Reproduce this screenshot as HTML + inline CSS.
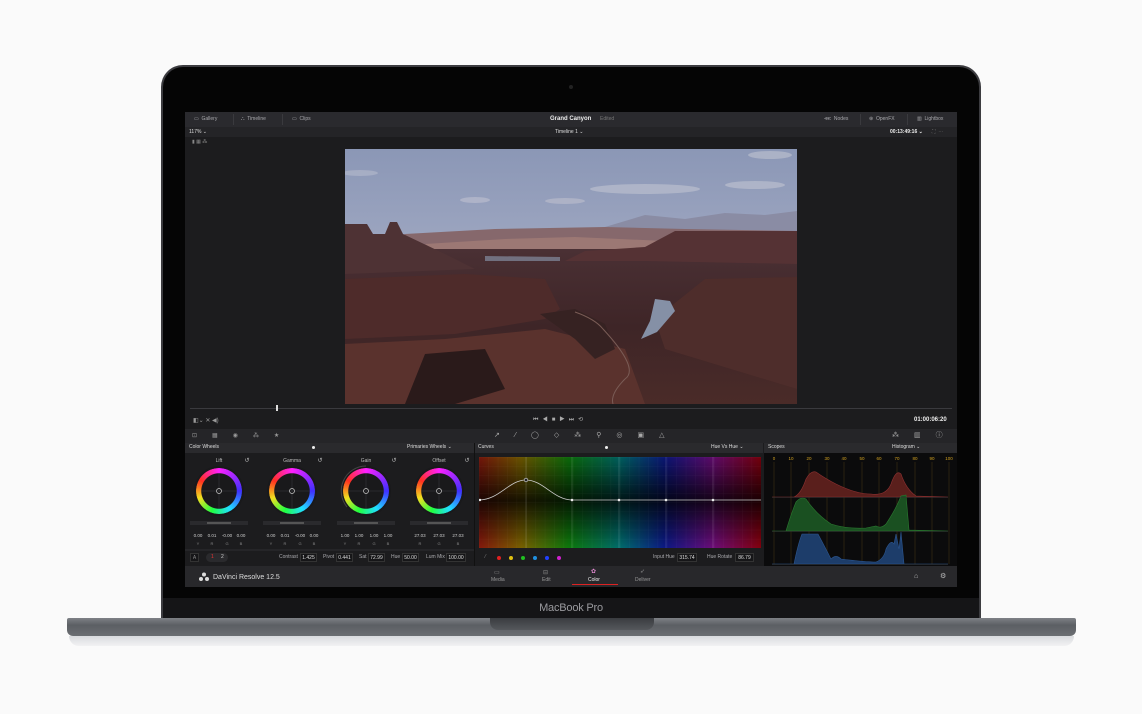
<!DOCTYPE html>
<html><head><meta charset="utf-8"><style>
*{margin:0;padding:0;box-sizing:border-box}
body{width:1142px;height:714px;background:#fafafa;position:relative;overflow:hidden;font-family:"Liberation Sans",sans-serif;color:#bbb}
.a{position:absolute}
.t{position:absolute;font-size:5px;color:#a9a9ad;white-space:nowrap;line-height:1}
.box{position:absolute;background:#161618;border:1px solid #333;font-size:5px;color:#ddd;text-align:center;line-height:8px;height:9px}
.sep{position:absolute;width:1px;background:#3a3a3e}
.wh{position:absolute;width:46px;height:46px;border-radius:50%;background:conic-gradient(#ff20ff,#4030ff 90deg,#20e0ff 150deg,#20ff40 200deg,#f0e020 250deg,#ff3020 300deg,#ff20ff);-webkit-mask:radial-gradient(circle,transparent 17.5px,#000 18px,#000 23px,transparent 23.5px);mask:radial-gradient(circle,transparent 17.5px,#000 18px,#000 23px,transparent 23.5px)}
</style></head><body>
<!-- lid -->
<div class="a" style="left:161px;top:65px;width:820px;height:554px;background:#3c3c40;border-radius:22px 22px 0 0"></div>
<div class="a" style="left:163px;top:67px;width:816px;height:552px;background:#050505;border-radius:20px 20px 0 0"></div>
<div class="a" style="left:569px;top:85px;width:4px;height:4px;border-radius:50%;background:#222"></div>
<div class="a" style="left:163px;top:598px;width:816px;height:20px;background:#151517"></div>
<div class="a" style="left:0;top:602px;width:1142px;text-align:center;font-size:11px;color:#9a9a9e;letter-spacing:-0.2px">MacBook Pro</div>
<!-- base -->
<div class="a" style="left:67px;top:618px;width:1009px;height:18px;background:linear-gradient(#7e8186,#5c5f64 40%,#6b6e72);border-radius:2px 2px 6px 6px"></div>
<div class="a" style="left:69px;top:636px;width:1005px;height:10px;background:linear-gradient(#d9dbde,#f2f2f3);border-radius:0 0 40px 40px"></div>
<div class="a" style="left:490px;top:618px;width:164px;height:12px;background:linear-gradient(#3a3c40,#55585c);border-radius:0 0 8px 8px"></div>

<!-- screen -->
<div class="a" style="left:185px;top:112px;width:772px;height:475px;background:#1c1c1e"></div>
<div class="a" style="left:185px;top:112px;width:772px;height:15px;background:#2a2a2e"></div>
<div class="t" style="left:194px;top:117px">▭&nbsp; Gallery</div>
<div class="sep" style="left:233px;top:114px;height:11px"></div>
<div class="t" style="left:241px;top:117px">⛬&nbsp; Timeline</div>
<div class="sep" style="left:282px;top:114px;height:11px"></div>
<div class="t" style="left:292px;top:117px">▭&nbsp; Clips</div>
<div class="t" style="left:550px;top:116px;font-size:6px;color:#eee;font-weight:bold">Grand Canyon</div>
<div class="t" style="left:600px;top:117px;color:#777">Edited</div>
<div class="t" style="left:824px;top:117px">⋘&nbsp; Nodes</div>
<div class="sep" style="left:860px;top:114px;height:11px"></div>
<div class="t" style="left:869px;top:117px">⊛&nbsp; OpenFX</div>
<div class="sep" style="left:907px;top:114px;height:11px"></div>
<div class="t" style="left:917px;top:117px">▥&nbsp; Lightbox</div>
<div class="a" style="left:185px;top:127px;width:772px;height:10px;background:#242427"></div>
<div class="t" style="left:189px;top:130px;color:#ddd">117% ⌄</div>
<div class="t" style="left:555px;top:130px;color:#ddd">Timeline 1 ⌄</div>
<div class="t" style="left:890px;top:130px;color:#eee;font-weight:bold">00:13:49:16 ⌄</div>
<div class="t" style="left:932px;top:130px;color:#777">⛶ &nbsp;⋯</div>
<div class="t" style="left:192px;top:140px;color:#888">▮ ▦ ⁂</div>

<!-- image -->
<svg class="a" style="left:345px;top:149px" width="452" height="255" viewBox="0 0 452 255">
<defs>
<linearGradient id="sky" x1="0" y1="0" x2="0" y2="1"><stop offset="0" stop-color="#8b97b6"/><stop offset="0.6" stop-color="#a7aec6"/><stop offset="1" stop-color="#b3afc0"/></linearGradient>
<linearGradient id="gr" x1="0" y1="0" x2="0" y2="1"><stop offset="0" stop-color="#4a3034"/><stop offset="0.5" stop-color="#3e2527"/><stop offset="1" stop-color="#4a2b28"/></linearGradient>
</defs>
<rect width="452" height="255" fill="url(#sky)"/>
<ellipse cx="300" cy="40" rx="55" ry="5" fill="#c9cbd6" opacity=".5"/>
<ellipse cx="220" cy="52" rx="20" ry="3" fill="#c6c6d2" opacity=".5"/>
<ellipse cx="130" cy="51" rx="15" ry="3" fill="#c7c8d5" opacity=".5"/>
<ellipse cx="410" cy="36" rx="30" ry="4" fill="#c9cbd6" opacity=".5"/>
<ellipse cx="425" cy="6" rx="22" ry="4" fill="#c9cbd6" opacity=".5"/>
<ellipse cx="15" cy="24" rx="18" ry="3" fill="#c9cbd6" opacity=".4"/>
<path d="M260 78 L300 66 L340 70 L380 64 L420 66 L452 62 L452 84 L260 84Z" fill="#8a8ca4"/>
<path d="M60 85 L150 80 L260 78 L340 80 L452 82 L452 110 L0 110Z" fill="#86686c"/>
<path d="M80 95 L160 90 L230 88 L320 92 L300 105 L100 108Z" fill="#9c7874"/>
<rect x="0" y="100" width="452" height="155" fill="url(#gr)"/>
<path d="M0 75 L22 75 L28 85 L40 85 L45 73 L52 73 L58 85 L100 105 L130 120 L0 125Z" fill="#4e3234"/>
<path d="M330 82 L452 82 L452 115 L300 112 L220 112 L240 102 L300 98Z" fill="#553234"/>
<path d="M140 107 L215 108 L215 112 L140 112Z" fill="#8d9cb3" opacity=".6"/>
<path d="M0 130 L120 125 L200 130 L215 160 L200 170 L110 185 L0 190Z" fill="#4e2b2a"/>
<path d="M360 130 L452 128 L452 240 L320 200 L310 170Z" fill="#4e2d2b"/>
<path d="M0 195 L100 190 L200 180 L280 200 L300 255 L0 255Z" fill="#5a322d"/>
<path d="M80 205 L140 200 L160 240 L110 255 L60 255Z" fill="#2a1a1a"/>
<path d="M195 165 L230 160 L260 175 L270 200 L250 210 L230 190Z" fill="#362222"/>
<path d="M310 150 L325 152 L330 162 L312 183 L296 190 L305 172Z" fill="#8590a6"/>
<path d="M230 163 Q250 170 258 180 Q295 220 280 230 Q265 245 268 255" stroke="#7a5c56" stroke-width="1" fill="none"/>
</svg>

<!-- scrubber + transport -->
<div class="a" style="left:190px;top:408px;width:762px;height:1px;background:#3a3a3e"></div>
<div class="a" style="left:276px;top:405px;width:2px;height:6px;background:#ddd"></div>
<div class="t" style="left:193px;top:418px;font-size:6px;color:#999">◧⌄ ✕ ◀)</div>
<div class="t" style="left:533px;top:417px;font-size:6px;color:#aaa;letter-spacing:4px">⏮◀■▶⏭⟲</div>
<div class="t" style="left:914px;top:417px;font-size:6px;color:#eee;font-weight:bold">01:00:06:20</div>
<!-- toolbar -->
<div class="a" style="left:185px;top:429px;width:772px;height:14px;background:#252528"></div>
<div class="t" style="left:192px;top:433px;font-size:6px;color:#999;letter-spacing:15px">⊡▦◉⁂★</div>
<div class="t" style="left:494px;top:432px;font-size:7px;color:#aaa;letter-spacing:15px">↗⁄◯◇⁂⚲◎▣△</div>
<div class="t" style="left:892px;top:432px;font-size:7px;color:#aaa;letter-spacing:15px">⁂▥ⓘ</div>
<!-- panel headers -->
<div class="a" style="left:185px;top:443px;width:289px;height:10px;background:#2a2a2d"></div>
<div class="a" style="left:475px;top:443px;width:288px;height:10px;background:#2a2a2d"></div>
<div class="a" style="left:764px;top:443px;width:193px;height:10px;background:#2a2a2d"></div>
<div class="t" style="left:189px;top:445px;color:#ddd">Color Wheels</div>
<div class="a" style="left:312px;top:446px;width:3px;height:3px;border-radius:50%;background:#eee"></div>
<div class="t" style="left:407px;top:445px;color:#ddd">Primaries Wheels ⌄</div>
<div class="t" style="left:478px;top:445px;color:#ddd">Curves</div>
<div class="a" style="left:605px;top:446px;width:3px;height:3px;border-radius:50%;background:#eee"></div>
<div class="t" style="left:711px;top:445px;color:#ddd">Hue Vs Hue ⌄</div>
<div class="t" style="left:768px;top:445px;color:#ddd">Scopes</div>
<div class="t" style="left:892px;top:445px;color:#ddd">Histogram ⌄</div>

<!-- wheels -->
<svg class="a" style="left:185px;top:453px" width="289" height="113">
<g font-family="Liberation Sans" font-size="5" fill="#bbb" text-anchor="middle">
<g id="w">
<circle cx="34" cy="38" r="25" fill="#19191b"/>
<line x1="16" y1="38" x2="52" y2="38" stroke="#3a3a3e" stroke-width=".5"/><line x1="34" y1="20" x2="34" y2="56" stroke="#3a3a3e" stroke-width=".5"/>
<circle cx="34" cy="38" r="2.5" fill="none" stroke="#ccc" stroke-width=".7"/>
<rect x="5" y="68" width="58" height="4" fill="#2a2a2d"/><rect x="22" y="69" width="24" height="2" fill="#555"/>
</g>
<use href="#w" x="73"/><use href="#w" x="147"/><use href="#w" x="220"/>
<path d="M162 54 A25 25 0 0 1 181 13" stroke="#444" stroke-width="1" fill="none"/>
<text x="34" y="9">Lift</text><text x="107" y="9">Gamma</text><text x="181" y="9">Gain</text><text x="254" y="9">Offset</text>
<text x="62" y="9" font-size="6">↺</text><text x="135" y="9" font-size="6">↺</text><text x="209" y="9" font-size="6">↺</text><text x="282" y="9" font-size="6">↺</text>
<g font-size="4.5" fill="#ccc">
<text x="13" y="84">0.00</text><text x="27" y="84">0.01</text><text x="42" y="84">-0.00</text><text x="56" y="84">0.00</text>
<text x="86" y="84">0.00</text><text x="100" y="84">0.01</text><text x="115" y="84">-0.00</text><text x="129" y="84">0.00</text>
<text x="160" y="84">1.00</text><text x="174" y="84">1.00</text><text x="189" y="84">1.00</text><text x="203" y="84">1.00</text>
<text x="235" y="84">27.03</text><text x="254" y="84">27.03</text><text x="273" y="84">27.03</text>
</g>
<g font-size="4" fill="#888">
<text x="13" y="92">Y</text><text x="27" y="92">R</text><text x="42" y="92">G</text><text x="56" y="92">B</text>
<text x="86" y="92">Y</text><text x="100" y="92">R</text><text x="115" y="92">G</text><text x="129" y="92">B</text>
<text x="160" y="92">Y</text><text x="174" y="92">R</text><text x="189" y="92">G</text><text x="203" y="92">B</text>
<text x="235" y="92">R</text><text x="254" y="92">G</text><text x="273" y="92">B</text>
</g></g>
<line x1="0" y1="97" x2="289" y2="97" stroke="#2e2e32"/>
</svg>
<div class="wh" style="left:196px;top:468px"></div>
<div class="wh" style="left:269px;top:468px"></div>
<div class="wh" style="left:343px;top:468px"></div>
<div class="wh" style="left:416px;top:468px"></div>
<div class="box" style="left:190px;top:553px;width:9px;color:#888">A</div>
<div class="a" style="left:206px;top:553px;width:22px;height:9px;border-radius:5px;background:#2a2a2d"></div>
<div class="t" style="left:211px;top:555px;color:#e33">1</div><div class="t" style="left:221px;top:555px;color:#ccc">2</div>
<div class="t" style="left:279px;top:555px">Contrast</div><div class="box" style="left:300px;top:553px;width:17px">1.425</div>
<div class="t" style="left:323px;top:555px">Pivot</div><div class="box" style="left:336px;top:553px;width:17px">0.441</div>
<div class="t" style="left:359px;top:555px">Sat</div><div class="box" style="left:368px;top:553px;width:17px">72.99</div>
<div class="t" style="left:391px;top:555px">Hue</div><div class="box" style="left:402px;top:553px;width:17px">50.00</div>
<div class="t" style="left:426px;top:555px">Lum Mix</div><div class="box" style="left:446px;top:553px;width:20px">100.00</div>

<!-- curves -->
<div class="a" style="left:474px;top:443px;width:1px;height:123px;background:#111"></div>
<svg class="a" style="left:479px;top:457px" width="282" height="91">
<defs>
<linearGradient id="hue" x1="0" x2="1"><stop offset="0" stop-color="#b02010"/><stop offset=".15" stop-color="#a08000"/><stop offset=".32" stop-color="#10a010"/><stop offset=".5" stop-color="#009090"/><stop offset=".66" stop-color="#1020b0"/><stop offset=".83" stop-color="#9010a0"/><stop offset="1" stop-color="#b00010"/></linearGradient>
<linearGradient id="dk" x1="0" y1="0" x2="0" y2="1"><stop offset="0" stop-color="#000" stop-opacity=".35"/><stop offset=".48" stop-color="#000" stop-opacity=".85"/><stop offset="1" stop-color="#000" stop-opacity=".25"/></linearGradient>
<pattern id="grid" width="9.4" height="9.1" patternUnits="userSpaceOnUse"><path d="M0 0H9.4M0 0V9.1" stroke="#ffffff" stroke-opacity=".08" stroke-width=".5" fill="none"/></pattern>
</defs>
<rect width="282" height="91" fill="url(#hue)"/><rect width="282" height="91" fill="url(#dk)"/><rect width="282" height="91" fill="url(#grid)"/>
<g stroke="#fff" stroke-opacity=".25" stroke-width=".6"><line x1="47" y1="0" x2="47" y2="91"/><line x1="93" y1="0" x2="93" y2="91"/><line x1="140" y1="0" x2="140" y2="91"/><line x1="187" y1="0" x2="187" y2="91"/><line x1="234" y1="0" x2="234" y2="91"/></g>
<path d="M0 43 C20 43 30 23 47 23 C64 23 75 43 93 43 L282 43" stroke="#ccc" stroke-width=".8" fill="none"/>
<circle cx="47" cy="23" r="1.8" fill="#222" stroke="#ddd" stroke-width=".6"/>
<g fill="#eee"><circle cx="1" cy="43" r="1.2"/><circle cx="93" cy="43" r="1.3"/><circle cx="140" cy="43" r="1.3"/><circle cx="187" cy="43" r="1.3"/><circle cx="234" cy="43" r="1.3"/></g>
</svg>
<div class="t" style="left:485px;top:555px;color:#888">⁄</div>
<div class="a" style="left:497px;top:556px;width:4px;height:4px;border-radius:50%;background:#e02020;box-shadow:12px 0 #e0c010,24px 0 #20c020,36px 0 #2090e0,48px 0 #2040ff,60px 0 #d020d0"></div>
<div class="t" style="left:653px;top:555px">Input Hue</div><div class="box" style="left:677px;top:553px;width:20px">315.74</div>
<div class="t" style="left:707px;top:555px">Hue Rotate</div><div class="box" style="left:735px;top:553px;width:19px">86.79</div>

<!-- scopes -->
<div class="a" style="left:764px;top:453px;width:193px;height:113px;background:#0b0b0c"></div>
<svg class="a" style="left:766px;top:454px" width="190" height="112">
<g font-family="Liberation Sans" font-size="4.5" fill="#d0a020" text-anchor="middle">
<text x="8" y="6">0</text><text x="25" y="6">10</text><text x="43" y="6">20</text><text x="61" y="6">30</text><text x="78" y="6">40</text><text x="96" y="6">50</text><text x="113" y="6">60</text><text x="131" y="6">70</text><text x="149" y="6">80</text><text x="166" y="6">90</text><text x="183" y="6">100</text></g>
<g stroke="#4a3a14" stroke-width=".5"><line x1="8" y1="8" x2="8" y2="110"/><line x1="25" y1="8" x2="25" y2="110"/><line x1="43" y1="8" x2="43" y2="110"/><line x1="61" y1="8" x2="61" y2="110"/><line x1="78" y1="8" x2="78" y2="110"/><line x1="96" y1="8" x2="96" y2="110"/><line x1="113" y1="8" x2="113" y2="110"/><line x1="131" y1="8" x2="131" y2="110"/><line x1="149" y1="8" x2="149" y2="110"/><line x1="166" y1="8" x2="166" y2="110"/><line x1="183" y1="8" x2="183" y2="110"/></g>
<path d="M6 43 L28 43 Q35 40 40 25 Q45 16 50 18 Q60 25 70 30 Q90 40 105 40 Q120 42 125 30 Q130 15 135 20 Q140 35 150 42 L182 43Z" fill="#5a1f1c" stroke="#8a3030" stroke-width=".6"/>
<path d="M6 77 L20 77 Q25 60 30 48 Q35 42 40 45 Q50 60 65 70 Q80 75 100 74 L110 72 Q115 75 120 70 Q130 55 135 42 L140 41 L143 76 L182 77Z" fill="#1a5021" stroke="#2a7a30" stroke-width=".6"/>
<path d="M6 110 L28 110 Q32 90 36 80 L52 80 Q60 95 65 105 Q70 100 75 105 Q100 108 110 108 Q118 105 120 95 Q125 85 128 90 L130 80 L133 95 L135 78 L138 110 L182 110Z" fill="#1d3d6a" stroke="#2c5690" stroke-width=".6"/>
<g stroke="#333" stroke-width=".6"><line x1="6" y1="43.5" x2="182" y2="43.5"/><line x1="6" y1="77.5" x2="182" y2="77.5"/><line x1="6" y1="110.5" x2="182" y2="110.5"/></g>
</svg>

<!-- footer -->
<div class="a" style="left:185px;top:566px;width:772px;height:21px;background:#28282b"></div>
<svg class="a" style="left:198px;top:572px" width="12" height="10"><g fill="#ddd"><circle cx="6" cy="2.5" r="2"/><circle cx="3" cy="7" r="2"/><circle cx="9" cy="7" r="2"/></g></svg>
<div class="t" style="left:213px;top:574px;font-size:7px;color:#ddd">DaVinci Resolve 12.5</div>
<div class="t" style="left:494px;top:570px;color:#888;font-size:6px">▭</div><div class="t" style="left:491px;top:578px;color:#999">Media</div>
<div class="t" style="left:543px;top:570px;color:#888;font-size:6px">⊟</div><div class="t" style="left:542px;top:578px;color:#999">Edit</div>
<div class="t" style="left:591px;top:569px;color:#d8c;font-size:6px">✿</div><div class="t" style="left:588px;top:578px;color:#eee">Color</div>
<div class="a" style="left:572px;top:584px;width:46px;height:1px;background:#d22"></div>
<div class="t" style="left:640px;top:569px;color:#888;font-size:6px">➶</div><div class="t" style="left:635px;top:578px;color:#999">Deliver</div>
<div class="t" style="left:914px;top:573px;color:#bbb;font-size:7px">⌂</div>
<div class="t" style="left:940px;top:573px;color:#bbb;font-size:7px">⚙</div>
</body></html>
